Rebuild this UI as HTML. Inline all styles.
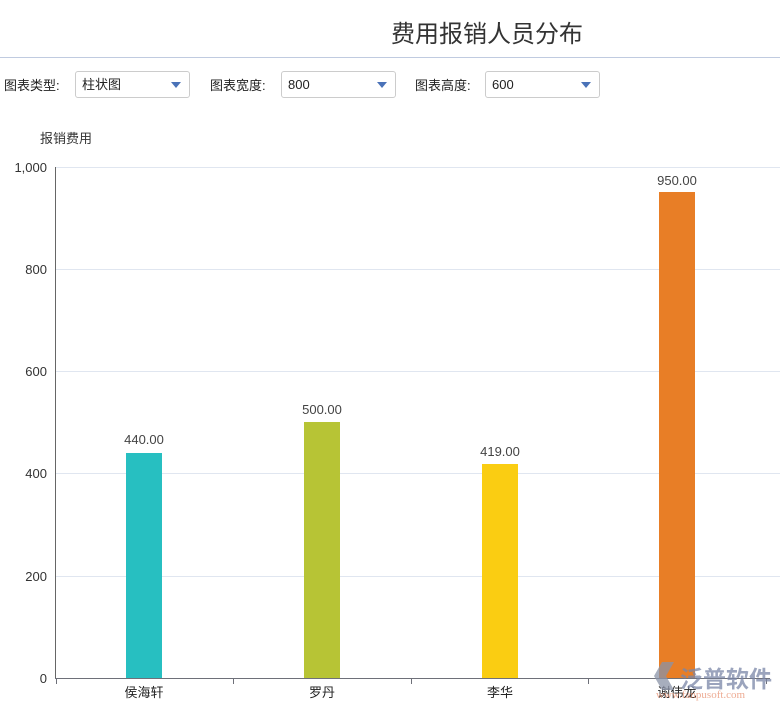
<!DOCTYPE html>
<html><head><meta charset="utf-8"><style>
body{margin:0;width:780px;height:705px;background:#fff;font-family:"Liberation Sans","Noto Sans CJK SC",sans-serif;position:relative;overflow:hidden;color:#333}
.title{position:absolute;left:0;width:780px;top:14px;font-size:24px;color:#333;}
.title span{position:absolute;left:391px;white-space:nowrap}
.line{position:absolute;left:0;right:0;top:57px;border-top:1px solid #c0cbe0}
.lbl{position:absolute;top:75px;font-size:13px;color:#222}
.sel{position:absolute;top:71px;width:115px;height:27px;border:1px solid #ccc;border-radius:3px;font-size:13px;line-height:26px;box-sizing:border-box;padding-left:6px;color:#222}
.sel:after{content:"";position:absolute;right:8px;top:10px;border-left:5px solid transparent;border-right:5px solid transparent;border-top:6px solid #4a72b8}
</style></head><body>
<div class="title"><span>费用报销人员分布</span></div>
<div class="line"></div>
<div class="lbl" style="left:4px">图表类型:</div>
<div class="sel" style="left:75px">柱状图</div>
<div class="lbl" style="left:210px">图表宽度:</div>
<div class="sel" style="left:281px">800</div>
<div class="lbl" style="left:415px">图表高度:</div>
<div class="sel" style="left:485px">600</div>
<svg width="780" height="705" style="position:absolute;left:0;top:0" font-family="Liberation Sans, Noto Sans CJK SC, sans-serif">
<text x="40" y="143" font-size="13" fill="#333">报销费用</text>
<g stroke="#e0e6f0" stroke-width="1">
<line x1="55" x2="780" y1="167.5" y2="167.5"/><line x1="55" x2="780" y1="269.5" y2="269.5"/>
<line x1="55" x2="780" y1="371.5" y2="371.5"/><line x1="55" x2="780" y1="473.5" y2="473.5"/>
<line x1="55" x2="780" y1="576.5" y2="576.5"/>
</g>
<g font-size="13" fill="#333" text-anchor="end">
<text x="47" y="172">1,000</text><text x="47" y="274">800</text><text x="47" y="376">600</text>
<text x="47" y="478">400</text><text x="47" y="581">200</text><text x="47" y="683">0</text>
</g>
<line x1="55.5" x2="55.5" y1="167" y2="678" stroke="#666"/>
<line x1="55" x2="770" y1="678.5" y2="678.5" stroke="#6e7079"/>
<g stroke="#6e7079"><line x1="56.5" x2="56.5" y1="678" y2="684"/><line x1="233.5" x2="233.5" y1="678" y2="684"/><line x1="411.5" x2="411.5" y1="678" y2="684"/><line x1="588.5" x2="588.5" y1="678" y2="684"/><line x1="766.5" x2="766.5" y1="678" y2="684"/></g>
<rect x="126" y="453" width="36" height="225" fill="#27bfc1"/>
<rect x="304" y="422" width="36" height="256" fill="#b7c435"/>
<rect x="482" y="464" width="36" height="214" fill="#facd12"/>
<rect x="659" y="192" width="36" height="486" fill="#e87e26"/>
<g font-size="13" fill="#444" text-anchor="middle">
<text x="144" y="444">440.00</text><text x="322" y="414">500.00</text>
<text x="500" y="456">419.00</text><text x="677" y="185">950.00</text>
</g>
<g font-size="13" fill="#222" text-anchor="middle">
<text x="144" y="697">侯海轩</text><text x="322" y="697">罗丹</text>
<text x="500" y="697">李华</text><text x="677" y="697">谢伟龙</text>
</g>
<g opacity="0.75">
<path d="M662 662 L674 662 L666 676 L674 690 L662 690 L654 676Z" fill="#8a93a8"/>
<text x="680" y="687" font-size="23" fill="#7a86a8" font-weight="bold">泛普软件</text>
<text x="656" y="698" font-size="11" fill="#e89070" font-family="Liberation Serif, serif">www.fanpusoft.com</text>
</g>
</svg>
</body></html>
